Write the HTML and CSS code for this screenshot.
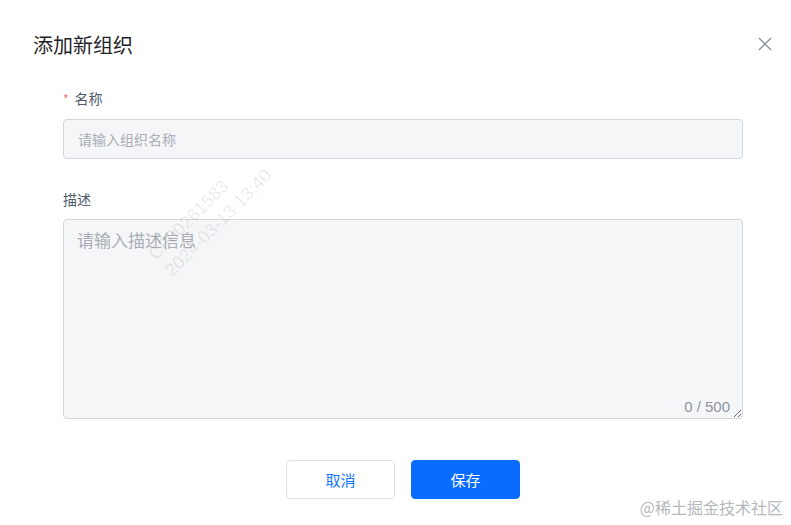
FILE: index.html
```html
<!DOCTYPE html>
<html lang="zh-CN">
  <head>
    <meta charset="UTF-8" />
    <meta name="viewport" content="width=device-width, initial-scale=1.0" />
    <title>添加新组织</title>
    <link rel="stylesheet" href="styles.css">
  </head>
  <body>
    <div class="dialog">
      <div class="dialog-header">
        <h2>添加新组织</h2>
        <button class="close" aria-label="关闭">
          <svg width="14" height="14" viewBox="0 0 14 14">
            <path d="M1 1 L13 13 M13 1 L1 13" stroke="#8a8f99" stroke-width="1.3" fill="none" />
          </svg>
        </button>
      </div>

      <form class="dialog-body">
        <div class="field">
          <label for="name"><span class="required">*</span>名称</label>
          <input type="text" id="name" placeholder="请输入组织名称" autocomplete="off" />
        </div>

        <div class="field">
          <label for="desc">描述</label>
          <div class="textarea-wrap">
            <textarea id="desc" placeholder="请输入描述信息" maxlength="500"></textarea>
            <span class="count">0 / 500</span>
          </div>
        </div>

        <div class="dialog-footer">
          <button type="button" class="btn">取消</button>
          <button type="button" class="btn btn-primary">保存</button>
        </div>
      </form>

      <div class="stamp">CF00261583<br />2024-03-13 13:40</div>
      <div class="credit">@稀土掘金技术社区</div>
    </div>
  </body>
</html>
```

FILE: styles.css
```css
* {
  box-sizing: border-box;
}
body {
  margin: 0;
  background: #fff;
  font-family: "Noto Sans CJK SC", "Noto Sans", sans-serif;
  color: #1f2329;
}
.dialog {
  position: relative;
  width: 791px;
  height: 525px;
  overflow: hidden;
}
.dialog-header {
  display: flex;
  align-items: center;
  justify-content: space-between;
  padding: 29px 19px 0 33px;
  height: 59px;
}
.dialog-header h2 {
  margin: 0;
  font-size: 20px;
  font-weight: 400;
  color: #1f2329;
}
.close {
  background: none;
  border: none;
  padding: 0;
  cursor: pointer;
  display: flex;
}
.dialog-body {
  padding: 28px 48px 0 63px;
}
.field {
  margin-bottom: 29px;
}
label {
  display: block;
  font-size: 14px;
  line-height: 22px;
  color: #4e5969;
  margin-bottom: 9px;
}
.required {
  color: #f56c6c;
  margin-right: 6px;
  font-size: 12px;
}
input[type="text"] {
  width: 100%;
  height: 40px;
  padding: 0 14px;
  font-size: 14px;
  font-family: inherit;
  background: #f5f6f8;
  border: 1px solid #d3d6dc;
  border-radius: 4px;
  outline: none;
}
input::placeholder,
textarea::placeholder {
  color: #a9adb5;
}
.textarea-wrap {
  position: relative;
}
textarea {
  display: block;
  width: 100%;
  height: 200px;
  padding: 6px 13px;
  font-size: 17px;
  line-height: 28px;
  font-family: inherit;
  background: #f5f6f8;
  border: 1px solid #d3d6dc;
  border-radius: 4px;
  outline: none;
  resize: vertical;
}
.count {
  position: absolute;
  right: 13px;
  bottom: 4px;
  font-size: 15px;
  color: #8f959e;
  background: #f5f6f8;
  font-family: "Liberation Sans", sans-serif;
}
.dialog-footer {
  display: flex;
  justify-content: center;
  gap: 16px;
  margin-top: 41px;
}
.btn {
  width: 109px;
  height: 39px;
  font-size: 15px;
  font-family: inherit;
  border-radius: 4px;
  border: 1px solid #dcdfe6;
  background: #fff;
  color: #1677ff;
  cursor: pointer;
}
.btn-primary {
  background: #0a6cff;
  border-color: #0a6cff;
  color: #fff;
}
.stamp {
  position: absolute;
  left: 144px;
  top: 249px;
  font-size: 18px;
  line-height: 23px;
  color: rgba(0, 0, 0, 0.09);
  transform: rotate(-45deg);
  transform-origin: left top;
  font-family: "Liberation Sans", sans-serif;
  pointer-events: none;
  white-space: nowrap;
}
.credit {
  position: absolute;
  right: 8px;
  bottom: 6px;
  font-size: 16px;
  color: #b5b8bd;
  pointer-events: none;
}
```
